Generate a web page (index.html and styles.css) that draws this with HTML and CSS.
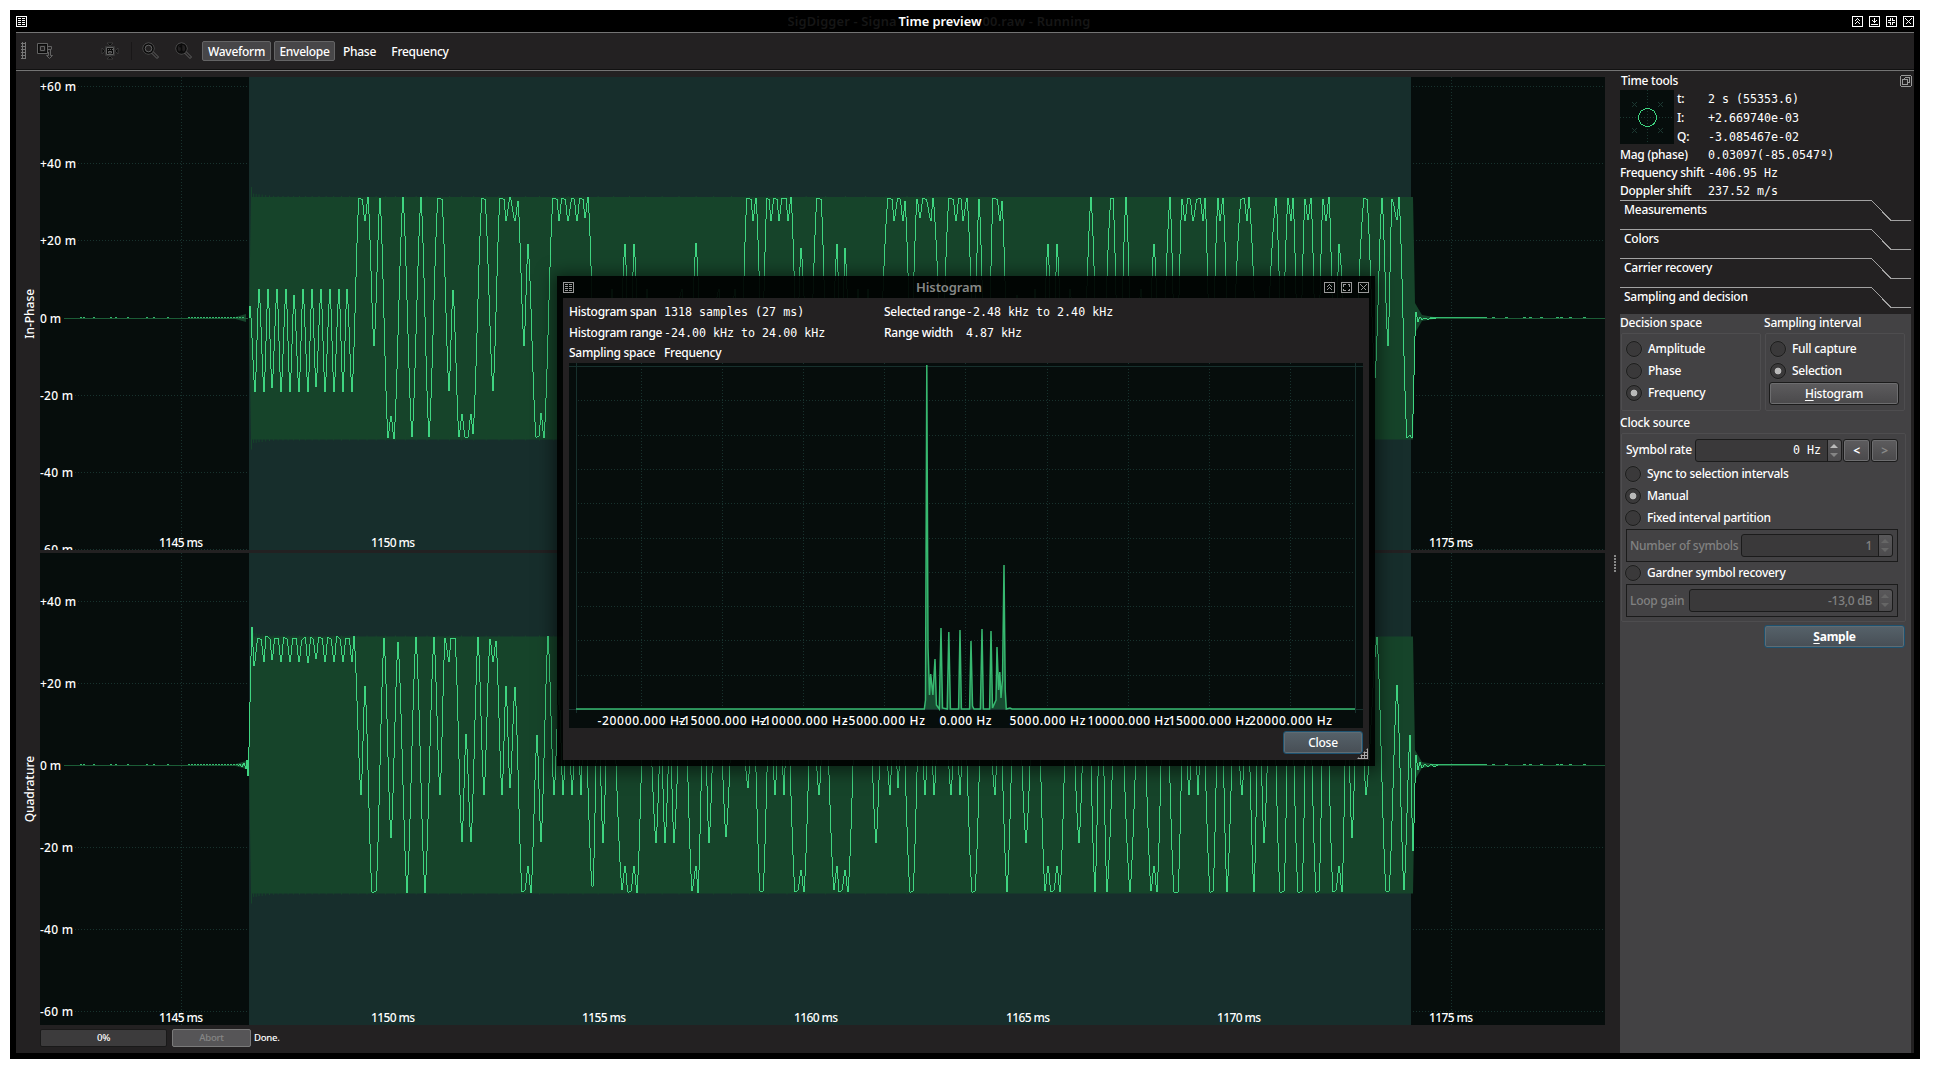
FILE: index.html
```html
<!DOCTYPE html>
<html lang="en">
<head>
<meta charset="utf-8">
<title>Time preview</title>
<link rel="stylesheet" href="styles.css">
</head>
<body>
<main class="window">
  <header class="titlebar">
    <svg class="wicon" width="11" height="11" viewBox="0 0 11 11"><path d="M.5.5h10v10h-10zM2 2.5h3M2 4.5h3M2 6.5h3M2 8.5h3M6 2.5h3M6 4.5h3M6 6.5h3M6 8.5h3"/></svg>
    <div class="titles"><span class="ghost left">SigDigger - Signa</span><span class="title">Time preview</span><span class="ghost right">00.raw - Running</span></div>
    <div class="controls">
      <svg class="wicon" width="11" height="11" viewBox="0 0 11 11"><path d="M.5.5h10v10h-10zM2.5 5.5l3-3 3 3M2.5 8.5l3-3 3 3"/></svg>
      <svg class="wicon" width="11" height="11" viewBox="0 0 11 11"><path d="M.5.5h10v10h-10zM5.5 2v5M3.5 4.5l2 2 2-2M2 8.5h7"/></svg>
      <svg class="wicon" width="11" height="11" viewBox="0 0 11 11"><path d="M.5.5h10v10h-10zM4.5 2v2.5H2M6.5 2v2.5H9M4.5 9V6.5H2M6.5 9V6.5H9"/></svg>
      <svg class="wicon" width="11" height="11" viewBox="0 0 11 11"><path d="M.5.5h10v10h-10zM2.500 2.500l6 6M8.500 2.500l-6 6"/></svg>
    </div>
  </header>
  <nav class="toolbar">
    <i class="grip"></i>
    <svg class="tool t1" width="18" height="18" viewBox="0 0 18 18"><rect class="k" x="2.500" y="2.500" width="8" height="8"/><path class="o" d="M1.500 1.500h10v10h-10zM4.500 4.500h4v4h-4zM12 4.500h3.500v3M12 7.500h3M12.500 10v3.500h-2l3 3 3-3h-2v-6"/></svg>
    <svg class="tool t2" width="18" height="18" viewBox="0 0 18 18"><path class="f" d="M6 1h6L9 4zM6 17h6L9 14zM1 6v6l3-3zM17 6v6l-3-3z"/><path class="f" d="M4.500 4.500h9v9h-9z"/><path class="o" d="M5.500 5.500h7v7h-7zM7 7.500h1M9 7.500h1M11 7.500h1M7.500 9.500h3v1.500h-3z"/></svg>
    <i class="sep"></i>
    <svg class="tool t3" width="18" height="18" viewBox="0 0 18 18"><circle class="o" cx="6.500" cy="6.500" r="5.500"/><circle class="k" cx="6.500" cy="6.500" r="4.500"/><circle class="o" cx="6.500" cy="6.500" r="3.300"/><path class="o" d="M11 9.500l5.500 5.500-1.500 1.500L9.500 11"/></svg>
    <svg class="tool t4" width="18" height="18" viewBox="0 0 18 18"><circle class="o" cx="6.500" cy="6.500" r="5.500"/><circle class="k" cx="6.500" cy="6.500" r="4.500"/><path class="k" d="M4.500 5l2-1.500v6M4.500 9.500h4"/><path class="o" d="M11 9.500l5.500 5.500-1.500 1.500L9.500 11"/></svg>
    <span class="tbtn on w1">Waveform</span><span class="tbtn on w2">Envelope</span><span class="tbtn w3">Phase</span><span class="tbtn w4">Frequency</span>
  </nav>
  <div class="body">
    <section class="plots">
      <div class="plotrow"><div class="axis"><span>In-Phase</span></div><svg id="inphase" width="1565" height="473" viewBox="40 77 1565 473"></svg></div>
      <div class="plotrow"><div class="axis"><span>Quadrature</span></div><svg id="quadrature" width="1565" height="472" viewBox="40 553 1565 472"></svg></div>
      <footer class="status"><div class="progress">0%</div><div class="abort">Abort</div><span>Done.</span></footer>
    </section>
    <div class="splitter"><i></i></div>
    <aside class="side">
      <div class="sidehead"><span>Time tools</span><svg width="12" height="12" viewBox="0 0 12 12"><path d="M1.500.5h9l1 1v9l-1 1h-9l-1-1v-9zM4.500 2.500h5v5h-2M2.500 4.500h5v5h-5zM4.500 2.500v2"/></svg></div>
      <div class="readout">
        <svg width="54" height="54" viewBox="0 0 54 54"><path class="grid" d="M27.500 0v54M0 27.500h54"/><path class="cross" d="M12 12l5 5M17 12l-5 5M38 12l5 5M43 12l-5 5M12 38l5 5M17 38l-5 5M38 38l5 5M43 38l-5 5"/><circle cx="27.500" cy="27.500" r="9"/></svg>
        <dl><dt>t:</dt><dd>2 s (55353.6)</dd><dt>I:</dt><dd>+2.669740e-03</dd><dt>Q:</dt><dd>-3.085467e-02</dd></dl>
      </div>
      <dl class="values"><dt>Mag (phase)</dt><dd>0.03097(-85.0547º)</dd><dt>Frequency shift</dt><dd>-406.95 Hz</dd><dt>Doppler shift</dt><dd>237.52 m/s</dd></dl>
      <div class="tab"><svg width="291" height="21"><path d="M0 .5h251.500l19.500 20h20"/></svg><span>Measurements</span></div>
      <div class="tab"><svg width="291" height="21"><path d="M0 .5h251.500l19.500 20h20"/></svg><span>Colors</span></div>
      <div class="tab"><svg width="291" height="21"><path d="M0 .5h251.500l19.500 20h20"/></svg><span>Carrier recovery</span></div>
      <div class="tab last"><svg width="291" height="21"><path d="M0 .5h251.500l19.500 20h20"/></svg><span>Sampling and decision</span></div>
      <div class="sampling">
        <div class="pair">
          <div class="col"><h4>Decision space</h4><div class="group top"><label class="radio">Amplitude</label><label class="radio">Phase</label><label class="radio sel">Frequency</label></div></div>
          <div class="col"><h4>Sampling interval</h4><div class="group top"><label class="radio">Full capture</label><label class="radio sel">Selection</label><div class="btn hist"><u>H</u>istogram</div></div></div>
        </div>
        <h4 class="clock">Clock source</h4>
        <div class="group source">
          <div class="rate"><span>Symbol rate</span><div class="spin mono"><b>0 Hz</b><i class="arrows"></i></div><div class="btn sq">&lt;</div><div class="btn sq off">&gt;</div></div>
          <label class="radio">Sync to selection intervals</label><label class="radio sel">Manual</label><label class="radio">Fixed interval partition</label>
          <div class="frame"><span>Number of symbols</span><div class="spin n1"><b>1</b><i class="arrows"></i></div></div>
          <label class="radio">Gardner symbol recovery</label>
          <div class="frame"><span>Loop gain</span><div class="spin n2"><b>-13,0 dB</b><i class="arrows"></i></div></div>
        </div>
        <div class="btn primary sample"><u>S</u>ample</div>
      </div>
    </aside>
  </div>
</main>
<section class="dialog">
  <header class="dtitle">
    <svg class="wicon" width="11" height="11" viewBox="0 0 11 11"><path d="M.5.5h10v10h-10zM2 2.500h3M2 4.500h3M2 6.500h3M2 8.500h3M6 2.500h3M6 4.500h3M6 6.500h3M6 8.500h3"/></svg>
    <span>Histogram</span>
    <div class="controls">
      <svg class="wicon" width="11" height="11" viewBox="0 0 11 11"><path d="M.5.5h10v10h-10zM2.500 5.500l3-3 3 3M2.500 8.500l3-3 3 3"/></svg>
      <svg class="wicon" width="11" height="11" viewBox="0 0 11 11"><path d="M.5.5h10v10h-10zM2.500 4.500v-2h2M6.500 2.500h2v2M8.500 6.500v2h-2M4.500 8.500h-2v-2"/></svg>
      <svg class="wicon" width="11" height="11" viewBox="0 0 11 11"><path d="M.5.5h10v10h-10zM2.500 2.500l6 6M8.500 2.500l-6 6"/></svg>
    </div>
  </header>
  <div class="dbody">
    <dl class="info">
      <dt>Histogram span</dt><dd>1318 samples (27 ms)</dd><dt>Selected range</dt><dd>-2.48 kHz to 2.40 kHz</dd>
      <dt>Histogram range</dt><dd>-24.00 kHz to 24.00 kHz</dd><dt>Range width</dt><dd>4.87 kHz</dd>
      <dt>Sampling space</dt><dd class="sans">Frequency</dd>
    </dl>
    <svg id="histogram" width="794" height="365" viewBox="569 363 794 365"></svg>
    <div class="dfoot"><div class="btn primary close">Close</div></div>
    <i class="sizegrip"></i>
  </div>
</section>
<script src="plots.js"></script>
</body>
</html>
```
FILE: styles.css
```css
* { box-sizing: border-box; margin: 0; padding: 0; }
body { background: #fff; color: #fff; font: 500 12px/18px "Noto Sans", "Open Sans", sans-serif; letter-spacing: -.26px; overflow: hidden; height: 1073px; white-space: nowrap; }
i { display: block; flex: none; }
svg { display: block; flex: none; }
dl { display: grid; }
dd, .mono b { font: 400 11.650px/18px "DejaVu Sans Mono", monospace; letter-spacing: 0; }

.window { width: 1910px; height: 1049px; margin: 10px; background: #000; padding: 0 6px 6px; display: flex; flex-direction: column; }
.titlebar { height: 22px; display: flex; align-items: center; justify-content: space-between; position: relative; }
.wicon path { fill: none; stroke: #fff; stroke-width: 1; shape-rendering: crispEdges; }
.controls { display: flex; gap: 6px; }
.titles { display: flex; width: 304px; margin-left: 0; font-weight: 600; font-size: 12.800px; letter-spacing: 0; }
.titles .left { width: 111px; overflow: hidden; }
.titles .title { width: 84px; }
.ghost { color: #161616; letter-spacing: .2px; }

.toolbar { height: 39px; background: #232122; border-top: 1px solid #747474; border-bottom: 1px solid #747474; box-shadow: inset 0 -1px #111; display: flex; align-items: center; padding-bottom: 2px; }
.grip { width: 5px; height: 17px; margin-left: 5px; background: radial-gradient(#777 0 1px, transparent 1.200px) 0 0 / 3px 3px; }
.tool { fill: none; }
.tool .o { fill: none; stroke: #626262; stroke-width: 1; }
.tool .f { fill: #0a0a0a; stroke: #4a4a4a; stroke-width: .6; }
.tool .k { fill: none; stroke: #0a0a0a; stroke-width: 1.600; }
.t1 { margin-left: 10px; }
.t2 { margin-left: 47px; }
.sep { width: 1px; height: 18px; background: #191718; margin-left: 12px; }
.t3 { margin-left: 10px; }
.t4 { margin-left: 15px; }
.tbtn { height: 20px; line-height: 19px; text-align: center; border: 1px solid transparent; border-radius: 2px; }
.tbtn.on { background: #474648; border-color: #646465; }
.w1 { width: 69px; margin-left: 9px; }
.w2 { width: 61px; margin-left: 3px; }
.w3 { width: 43px; margin-left: 3px; }
.w4 { width: 68px; margin-left: 5px; }

.body { flex: 1; display: flex; background: #232122; height: 982px; }
.plots { padding-top: 6px; display: flex; flex-direction: column; gap: 3px; }
.plotrow { display: flex; }
.axis { width: 24px; padding-left: 4px; display: flex; align-items: center; justify-content: center; }
.axis span { writing-mode: vertical-rl; transform: rotate(180deg); font-size: 12px; letter-spacing: -.05px; }
.status { display: flex; align-items: center; margin: 1px 0 0 24px; height: 18px; font-size: 9.600px; }
.progress { width: 127px; height: 18px; line-height: 16px; text-align: center; background: #3c3b3c; border: 1px solid #191919; border-radius: 2px; }
.abort { width: 79px; height: 18px; line-height: 16px; margin: 0 3px 0 5px; text-align: center; color: #858585; background: #565557; border: 1px solid #7a7a7a; border-radius: 2px; }

#inphase, #quadrature, #histogram { background: #060d0c; }
.dots { stroke: #18322e; stroke-width: 1; stroke-dasharray: 1 2; fill: none; shape-rendering: crispEdges; }
.solid { stroke: #17302d; stroke-width: 1; fill: none; shape-rendering: crispEdges; }
.selection { fill: #172e2c; }
.envelope { fill: #16442a; }
.zero { stroke: #1b5c36; fill: none; shape-rendering: crispEdges; }
.noise { stroke: #34b86e; fill: none; shape-rendering: crispEdges; }
.wave { fill: #3fd581; shape-rendering: crispEdges; }
.spectrum { stroke: #37b870; stroke-width: 1.500; fill: rgba(40, 140, 85, .5); }
.plottext { fill: #fff; font: 500 12px "Noto Sans", sans-serif; letter-spacing: 0; }

.splitter { width: 15px; display: flex; align-items: center; justify-content: center; }
.splitter i { width: 2px; height: 18px; margin: 3px 0 0 5px; background: repeating-linear-gradient(#888 0 2px, transparent 2px 3px); }
.side { width: 291px; margin-right: 3px; display: flex; flex-direction: column; }
.sidehead { height: 18px; padding: 1px 0 0 1px; display: flex; justify-content: space-between; align-items: center; }
.sidehead svg { margin-right: -1px; }
.sidehead path { fill: none; stroke: #999; shape-rendering: crispEdges; }
.readout { display: flex; height: 57px; }
.readout > svg { margin-top: 1px; background: #060d0c; }
.readout .grid { stroke: #1c3832; stroke-dasharray: 1 2; }
.readout .cross { stroke: #1c3832; }
.readout circle { stroke: #3fd581; fill: none; shape-rendering: crispEdges; }
.readout dl { margin-left: 3px; padding-top: 1px; grid-template-columns: 31px auto; grid-auto-rows: 19px; align-content: start; }
.values { grid-template-columns: 88px auto; grid-auto-rows: 18px; }
.tab { height: 29px; display: grid; }
.tab.last { height: 27px; }
.tab > * { grid-area: 1 / 1; }
.tab path { fill: none; stroke: #a2a2a2; shape-rendering: crispEdges; }
.tab span { padding: 1px 4px; }
.sampling { flex: 1; background: #434244; display: flex; flex-direction: column; }
.pair { display: flex; gap: 3px; }
.col { width: 141px; }
h4 { font-size: 12px; font-weight: 500; height: 19px; line-height: 18px; letter-spacing: -.2px; }
.group { border: 1px solid #4e4d4f; border-radius: 2px; margin-left: 1px; }
.group.top { height: 78px; padding: 4px 4px; width: 140px; }
.radio { height: 22px; line-height: 22px; display: flex; align-items: center; gap: 6px; margin-left: -1px; }
.top .radio { margin-left: 0; }
.radio::before { content: ""; width: 14px; height: 14px; flex: none; border-radius: 50%; border: 1px solid #1d1d1d; background: #3a393a; box-shadow: 0 0 0 .5px #4c4c4c; }
.radio.sel::before { background: radial-gradient(#b9b9b9 0 3px, #3a393a 3.700px); }
.btn { text-align: center; border: 1px solid #1b1b1b; border-radius: 3px; box-shadow: inset 0 0 0 1px #6d6d6f; background: linear-gradient(#5d5c5e, #4a494b); font-size: 12px; }
.btn u { text-underline-offset: 2px; }
.hist { width: 130px; height: 23px; line-height: 22px; margin-left: -1px; }
.clock { margin-top: 3px; }
.source { width: 285px; height: 189px; padding: 4px 7px 0 4px; }
.rate { display: flex; align-items: center; height: 24px; margin-bottom: 1px; }
.rate .spin { width: 147px; margin-left: auto; }
.spin { height: 23px; border: 1px solid #1b1b1b; border-radius: 3px; background: #3a393a; display: flex; justify-content: flex-end; align-items: center; }
.spin b { font-weight: 500; margin-right: 6px; }
.spin.mono b { font-weight: 400; }
.arrows { width: 14px; height: 21px; border-left: 1px solid #1b1b1b; border-radius: 0 3px 3px 0; background: linear-gradient(#59585a, #4c4b4d); position: relative; }
.arrows::before, .arrows::after { content: ""; position: absolute; left: 2px; border: 4px solid transparent; }
.arrows::before { border-bottom-color: #bbb; top: 0; }
.arrows::after { border-top-color: #858585; bottom: 0; }
.frame .arrows::before { border-bottom-color: #666; }
.frame .arrows::after { border-top-color: #666; }
.sq { width: 27px; height: 23px; line-height: 21px; margin-left: 1px; font-weight: 700; }
.sq.off { color: #888; }
.frame { height: 33px; border: 1px solid #1b1b1b; display: flex; align-items: center; justify-content: space-between; padding: 0 4px 0 3px; color: #818181; }
.n1 { width: 152px; }
.n2 { width: 204px; }
.btn.primary { border-color: #1d5270; background: linear-gradient(#56626a, #474e55); box-shadow: inset 0 0 0 1px #5e6c74; }
.sample { width: 141px; height: 23px; line-height: 21px; margin: 3px 0 0 144px; font-weight: 700; }

.dialog { position: absolute; left: 557px; top: 276px; width: 818px; height: 490px; background: rgba(0, 0, 0, .93); padding: 0 6px 6px; box-shadow: 0 2px 16px 4px rgba(0, 0, 0, .5); }
.dtitle { height: 22px; display: flex; align-items: center; justify-content: space-between; font-weight: 600; font-size: 13px; color: #868886; letter-spacing: -.1px; }
.dtitle .wicon path { stroke: #999; }
.dbody { height: 462px; background: #232122; padding: 4px 6px 0; position: relative; }
.info { height: 61px; grid-template-columns: 95px 220px 82px auto; grid-template-rows: 21px 20px 20px; line-height: 20px; }
.info dd { line-height: 20px; }
.info dd.sans { font: inherit; letter-spacing: inherit; line-height: 20px; }
.dfoot { display: flex; justify-content: flex-end; padding-top: 3px; }
.close { width: 80px; height: 23px; line-height: 22px; }
.sizegrip { position: absolute; right: 1px; bottom: 1px; width: 11px; height: 11px; background: radial-gradient(#aaa 0 1px, transparent 1.200px) 0 0 / 3px 3px; clip-path: polygon(100% 0, 100% 100%, 0 100%); }
```
FILE: plots.js
```js
// Extremes of each trace as flat x, y lists; the curve eases between them.
const I = [249,318,250.2,306,254.7,392,258.8,288.5,263.7,392,267.8,289,272.2,388,276.7,289,280.8,392,285.7,289,289.8,392,293.9,295,298.8,392,302.9,289,307.8,392,311.8,289,316,387,320.8,289,325,392,329.8,289,334,392,338.8,289,342.9,392,347,289,351.8,392,359.2,197.5,362,199,365,221,367.8,197,373.9,345.5,379.6,198,388.2,437.5,390.6,416,393.9,438.5,402.9,197,411.8,437,420.8,197,429,437,438,197.5,442.4,199,448.6,391,452.7,289.5,458.8,437,461.6,414,464.9,437,468.2,437,470.6,413.5,473,434,482,197.5,485,199,492.7,391,499.6,197.5,503.5,199,506,221,509.8,197,514.7,221,517.5,201,523.7,345.5,527.8,244,535.5,437,538.5,436,541,413,543.7,438,553,197.5,556.5,199,558.8,221,562.4,197.5,565,199,567.8,221,571.8,197.5,574,199,576.7,221,580.4,197.5,583,199,585,218,587.8,197,597,437,606,437,611.7,289,618,391,625,244,629.5,391,634,244,641,391,647,289,652,391,665,391,682,289,689,391,695.7,243,703,391,718.7,289,726,391,735,289,739.5,391,747.3,197.5,750.5,199,752.7,221,755.7,197.5,761.5,345,766.5,198,768.5,199,770.7,221,774.3,197.5,776.5,199,779,221,782,198,785.5,198,788,221,790.7,196.5,797,345,801,248,809,391,816.5,197.5,821.3,199,829,437,836.7,244,841,391,845,248,851,391,858.3,289,863,391,867.7,289,876,437,887.7,197.5,891.5,199,894,221,897.5,197.5,900,199,903,221,905.3,201,911,345,916.7,198.5,920,218,923,198,926,199,930.7,221,933,197.5,942,345,949.3,197.5,952.5,199,956,221,958.5,197.5,961,199,963.3,221,966.7,197.5,974,345,979,199,986.500,437,993,197.5,996.5,199,1000,221,1002.3,201,1010,437,1016.7,295,1026,437,1035,289,1041,391,1047.8,244,1052.5,391,1056.5,244,1064,391,1070.4,289,1081,437,1091,197,1100,437,1111,198,1112.5,198,1119,391,1125.7,197,1133,391,1140.8,289,1147,391,1153.8,244,1161,391,1170,197,1176,391,1181.9,198.5,1184.7,221,1187.8,197.5,1190,199,1193.4,221,1197,199,1199.5,197.5,1202.8,221,1204.8,197.5,1211,391,1217.5,198,1220.2,221,1223,197.5,1230,391,1241.2,199,1243.5,197.5,1247,221,1249,197,1261,437,1275.6,197.5,1281.5,345,1287.5,198,1290.6,221,1293,197.5,1299,391,1305.3,198.5,1308,220,1310.8,197.5,1317,391,1322.7,198.5,1325.8,221,1329,196.5,1334.500,391,1338.9,243.500,1351,437,1363.8,197.5,1367,199,1375.2,378,1382,197.5,1387.9,345.5,1392.2,198.5,1396.6,220,1399,197,1407.3,438,1409.6,435,1412.4,438,1416,312,1418,322,1420,316.500,1422,320,1424,317.500,1428,319,1431,317.500,1436,318.5];
const Q = [238,765,240,764,242,767,244,763,245.500,769,247,760,248.3,776,252.2,627.3,254.3,666,257.500,638,260.500,639,263.7,662,266,635.5,269.500,639,272.2,660,275,638,278,638,280.8,662,283.500,637,287,639,289.8,662,292.500,638,295.500,638,298.8,662,301.500,640,304.500,637,307.8,663,310.500,637,313,639,316,659,318.500,637,322,638,325,662,327.500,637,331,639,334,662,336.500,636,340,639,342.9,662,345.500,638,349,638,351.8,662,354,636,360.8,795,365,686,371.500,892,375.5,891,383.7,638,390.6,838,398.4,642,407,892.5,416,637,425,892.5,434,637,439.6,795,445.3,638,448.6,662,451,638,454.500,638,461.6,842,465.7,734,470.6,842,478,637,483.7,795,489.8,638.5,492.7,662,495.5,641,501.6,795,505.7,686,509.8,788,514.7,687,522,892,525,890,527.8,866,530.6,892.5,536.7,735,541,842,548,636,554.3,795,558.5,690,563,795,567.5,690,572,795,576.5,690,581,795,584,690,591.5,886,593,886,598,690,602.7,842.5,610,637,622,890,625,866,628.3,892,631,891,634,866,637,892.5,646,637,656,843,660.5,734,665,843,669.5,734,674,843,683,637,692,891,695.7,866,698.3,892.5,704,690,709,843,717,637,726,837,736,637,748,788,753,690,759.7,891,763,891,770,690,775,795,779.5,690,784,795,787,700,795.3,892,798,890,801,870,804,892,812,690,819,795,825,690,833.7,890,836.7,866,839.3,892,842,890,845,870,848,892,858,637,867,637,876,842.5,883,690,890,795,894,690,898,788,902,700,909.5,892,913,891,920,690,925,795,929.5,690,934,795,942,637,951,795,955.5,690,960,795,963.500,700,972,892,975,891,984,637,995,795,999,690,1006.8,892,1016,637,1025.7,842.5,1036,637,1045.4,891,1048.2,866,1051,892,1054,890,1056.8,866,1060,892,1069,637,1079,842.5,1087,637,1095,892,1101,660,1107,892,1118,637,1130,892,1141,637,1151.4,891,1154,866,1156.8,892,1165,637,1174,892,1178,892,1184,690,1189,795,1193.5,690,1197.9,795,1202,690,1209.5,892,1213,891,1220,637,1226.8,892,1235,690,1241.8,795,1246.5,690,1254,892,1259,690,1264,842.5,1272,637,1280,892,1283.5,891,1290,637,1298,892,1301.5,891,1308,637,1315.5,892,1319,891,1325,637,1333,892,1336,890,1339,866,1341.8,892,1347,690,1351.8,838,1359,637,1366,795,1376.8,637,1385.5,891,1389,891,1396.8,685,1404,890,1410,735,1412.9,851,1416,755,1418,770,1420,762,1422,768,1425,763.500,1428,767,1431,764,1434,766.500,1438,765];
const H = [576,709,924.3,709,925.5,700,926.800,365,928,647,929.5,695,930.7,674,932.9,695,935,659,936.4,705,939.3,709,941,628,942.5,708,947.2,709,948.8,632,950.4,709,958.6,709,960,630,961.4,709,969.6,709,971,641,972.5,706,974,709,980.4,709,982,629,983.4,709,989.6,709,991,631,992.5,708,996,700,997,647,998.6,690,999.8,672,1001,698,1002.500,680,1004,565,1005.200,690,1006.300,709,1010,708,1012,709,1355,709];

// One vertical run per pixel column, joined end to end. Every extreme sits in
// a whole column so that the tips of the peaks keep their height.
function columns(points) {
  let d = "";
  let last = points[1];
  for (let i = 2; i < points.length; i += 2) {
    const x0 = Math.round(points[i - 2]), y0 = points[i - 1];
    const x1 = Math.round(points[i]), y1 = points[i + 1];
    for (let x = x0 + 1; x <= x1; x++) {
      const t = (x - x0) / (x1 - x0);
      const s = 0.45 * t + 0.55 * (1 - Math.cos(Math.PI * t)) / 2;
      const y = y0 + (y1 - y0) * s;
      const top = Math.round(Math.min(last, y));
      const height = Math.max(1, Math.round(Math.max(last, y)) - top);
      d += `M${x - 1} ${top}h1v${height}h-1z`;
      last = y;
    }
  }
  return d;
}

function text(x, y, value, anchor, width) {
  return `<text class="plottext" x="${x}" y="${y}" text-anchor="${anchor}" ${width ? `textLength="${width}"` : ""}>${value}</text>`;
}

// Short raised dashes on the zero line, denser close to the burst.
function noise(y) {
  let d = "";
  for (let n = 0, x = 80; x < 245; x += 3 + (n++ * 7) % (x < 180 ? 19 : 7)) d += `M${x} ${y}h2`;
  for (let n = 0, x = 1430; x < 1600; x += 3 + (n++ * 5) % (x > 1480 ? 17 : 5)) d += `M${x} ${y}h3`;
  return d;
}

function drawTrace(id, o) {
  let grid = "", labels = "";
  for (let m = 60, y = o.first; m >= -60; m -= 20, y += o.step) {
    if (y < o.top) continue;
    if (m) grid += `M${m > 0 ? 78 : 75} ${y}H1605`;
    labels += text(40, y + 4.5, `${m > 0 ? "+" : ""}${m} m`, "start", m ? (m > 0 ? 36 : 33) : 21);
  }
  for (let t = 0; t < 7; t++) {
    const x = Math.round(181 + t * 211.65) + 0.5;
    grid += `M${x} ${o.top}V${o.bottom}`;
    labels += text(x - 0.5, o.bottom - 3.5, `${1145 + t * 5} ms`, "middle", 44);
  }
  let fringe = "";
  for (let k = 0; k < 60; k++) {
    const x = 251 + k * 2 * (1 + k / 12), h = k ? (k < 8 ? 4 - k / 2.5 : 1) : 10;
    if (x < 1410) fringe += `M${x} ${o.env[0] - h}h1v${h}h-1zM${x} ${o.env[1]}h1v${h}h-1z`;
  }
  const z = o.zero;
  document.getElementById(id).innerHTML =
    `<path class="dots" d="${grid}"/><rect class="selection" x="249" y="${o.top}" width="1162" height="500"/>` +
    `<path class="envelope" d="M249 ${z}L251 ${o.env[0]}H1413L1414 ${z - 70}L1415 ${z - 15}L1422 ${z - 3}L1440 ${z}L1422 ${z + 3}L1415 ${z + 15}L1413 ${o.env[1]}H251ZM232 ${z}L246 ${z - 4}V${z + 4}Z${fringe}"/>` +
    `<path class="zero" d="M64 ${z + 0.5}H248M1416 ${z + 0.5}H1605"/><path class="noise" d="${noise(z - 0.5)}"/>` +
    `<path class="wave" d="${columns(o.points)}"/>${labels}`;
}

drawTrace("inphase", { top: 77, bottom: 550, first: 86.5, step: 77.17, env: [197, 439.5], zero: 318, points: I });
drawTrace("quadrature", { top: 553, bottom: 1025, first: 519.5, step: 82, env: [636.5, 893.5], zero: 765, points: Q });

let dots = "", ticks = "";
for (let i = 1; i < 10; i++) dots += `M578 ${Math.round(366 + i * 34.3) + 0.5}H1355`;
for (let i = 0; i < 9; i++) {
  const x = Math.round(641 + i * 81.1) + 0.5;
  dots += `M${x} 363V708`;
  const width = [88, 88, 88, 81, 52, 76, 82, 82, 83][i];
  ticks += text(x, 725, `${(i - 4) * 5000}.000 Hz`, "middle", width);
}
document.getElementById("histogram").innerHTML =
  `<path class="dots" d="${dots}"/><path class="solid" d="M576.5 363V713M1355.5 363V713M569 366.5H1363M569 709.5H1363"/>` +
  `<path class="spectrum" d="M${H.join(" ")}"/>${ticks}`;
```
